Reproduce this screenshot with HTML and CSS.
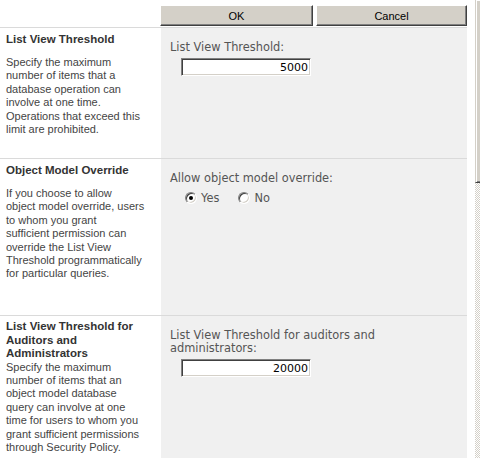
FILE: index.html
```html
<!DOCTYPE html>
<html lang="en">
<head>
  <meta charset="UTF-8">
  <meta name="viewport" content="width=device-width, initial-scale=1.0">
  <link rel="stylesheet" href="styles.css">
</head>
<body>
  <div class="page">
    <!-- Settings form -->
    <div class="content">
      <!-- Toolbar -->
      <div class="toolbar">
        <button class="btn btn-ok">OK</button>
        <button class="btn btn-cancel">Cancel</button>
      </div>

      <!-- List View Threshold -->
      <div class="section section-threshold">
        <div class="section-info">
          <h3 class="section-title">List View Threshold</h3>
          <p class="section-desc">Specify the maximum<br>number of items that a<br>database operation can<br>involve at one time.<br>Operations that exceed this<br>limit are prohibited.</p>
        </div>
        <div class="section-body">
          <label class="field-label" for="threshold">List View Threshold:</label>
          <input class="field-input" type="text" id="threshold" value="5000">
        </div>
      </div>

      <!-- Object Model Override -->
      <div class="section section-override">
        <div class="section-info">
          <h3 class="section-title">Object Model Override</h3>
          <p class="section-desc">If you choose to allow<br>object model override, users<br>to whom you grant<br>sufficient permission can<br>override the List View<br>Threshold programmatically<br>for particular queries.</p>
        </div>
        <div class="section-body">
          <span class="field-label">Allow object model override:</span>
          <div class="radio-group">
            <span class="radio-option"><span class="radio checked"></span>Yes</span>
            <span class="radio-option"><span class="radio"></span>No</span>
          </div>
        </div>
      </div>

      <!-- Auditors and Administrators -->
      <div class="section section-auditors">
        <div class="section-info">
          <h3 class="section-title section-title-long">List View Threshold for Auditors and Administrators</h3>
          <p class="section-desc section-desc-tight">Specify the maximum<br>number of items that an<br>object model database<br>query can involve at one<br>time for users to whom you<br>grant sufficient permissions<br>through Security Policy.</p>
        </div>
        <div class="section-body">
          <label class="field-label" for="auditorThreshold">List View Threshold for auditors and administrators:</label>
          <input class="field-input" type="text" id="auditorThreshold" value="20000">
        </div>
      </div>
    </div>

    <!-- Window scrollbar -->
    <div class="scrollbar">
      <div class="scroll-thumb"></div>
    </div>
  </div>
</body>
</html>
```

FILE: styles.css
```css
/* General Styles */
body {
  margin: 0;
  padding: 0;
  background-color: #FFFFFF;
  font-family: 'Liberation Sans', Arial, sans-serif;
  font-size: 11px;
  overflow: hidden;
}

.page {
  display: flex;
  gap: 8px;
  height: 458px;
}

.content {
  width: 467px;
  display: flex;
  flex-direction: column;
}

/* Toolbar */
.toolbar {
  display: flex;
  gap: 3px;
  height: 27px;
  padding: 5px 0 0 160px;
  box-sizing: border-box;
}

.btn {
  height: 21px;
  padding: 0;
  background-color: #D4D0C8;
  border-top: 1px solid #FFFFFF;
  border-left: 1px solid #FFFFFF;
  border-right: 1px solid #404040;
  border-bottom: 1px solid #404040;
  box-shadow: inset -1px -1px 0 #808080;
  font-family: 'Liberation Sans', Arial, sans-serif;
  font-size: 11px;
  color: #000000;
}

.btn-ok {
  width: 153px;
}

.btn-cancel {
  flex: 1;
}

/* Sections */
.section {
  display: flex;
  border-top: 1px solid #DADADA;
  box-sizing: border-box;
}

.section-threshold {
  height: 131px;
}

.section-override {
  height: 157px;
}

.section-auditors {
  flex: 1;
}

.section-info {
  width: 161px;
  padding: 4px 6px 0 6px;
  box-sizing: border-box;
}

.section-title {
  margin: 0;
  font-size: 11.5px;
  font-weight: bold;
  line-height: 14px;
  color: #333333;
}

.section-title-long {
  line-height: 13.5px;
}

.section-desc {
  margin: 10px 0 0;
  line-height: 13.4px;
  color: #444444;
}

.section-desc-tight {
  margin-top: 0;
}

.section-body {
  flex: 1;
  background-color: #F0F0F0;
  padding: 13px 9px 0;
}

.field-label {
  display: block;
  max-width: 280px;
  font-family: 'DejaVu Sans', Verdana, sans-serif;
  font-size: 11.4px;
  line-height: 13px;
  color: #555555;
}

.field-input {
  display: block;
  width: 130px;
  height: 18px;
  margin: 4px 0 0 11px;
  padding: 0 2px;
  box-sizing: border-box;
  border-top: 1px solid #808080;
  border-left: 1px solid #808080;
  border-right: 1px solid #FFFFFF;
  border-bottom: 1px solid #FFFFFF;
  box-shadow: inset 1px 1px 0 #404040, inset -1px -1px 0 #D4D0C8;
  background-color: #FFFFFF;
  font-family: 'DejaVu Sans', Verdana, sans-serif;
  font-size: 11px;
  text-align: right;
  color: #000000;
}

/* Radio buttons */
.radio-group {
  display: flex;
  gap: 19px;
  height: 16px;
  margin: 5px 0 0 15px;
}

.radio-option {
  display: flex;
  align-items: center;
  gap: 4px;
  font-family: 'DejaVu Sans', Verdana, sans-serif;
  font-size: 11.4px;
  color: #555555;
}

.radio {
  position: relative;
  width: 12px;
  height: 12px;
  border-radius: 50%;
  box-sizing: border-box;
  border: 1px solid;
  border-color: #808080 #FFFFFF #FFFFFF #808080;
  box-shadow: inset 1px 1px 0 #404040, inset -1px -1px 0 #D4D0C8;
  background-color: #FFFFFF;
}

.radio.checked::after {
  content: '';
  position: absolute;
  top: 3px;
  left: 3px;
  width: 4px;
  height: 4px;
  border-radius: 50%;
  background-color: #000000;
}

/* Scrollbar */
.scrollbar {
  width: 5px;
  background: repeating-conic-gradient(#D4D0C8 0 25%, #FFFFFF 0 50%) 0 0 / 2px 2px;
}

.scroll-thumb {
  height: 183px;
  box-sizing: border-box;
  background-color: #D4D0C8;
  border-left: 1px solid #D4D0C8;
  border-bottom: 1px solid #404040;
  box-shadow: inset 1px 1px 0 #FFFFFF, inset 0 -1px 0 #808080;
}
```
